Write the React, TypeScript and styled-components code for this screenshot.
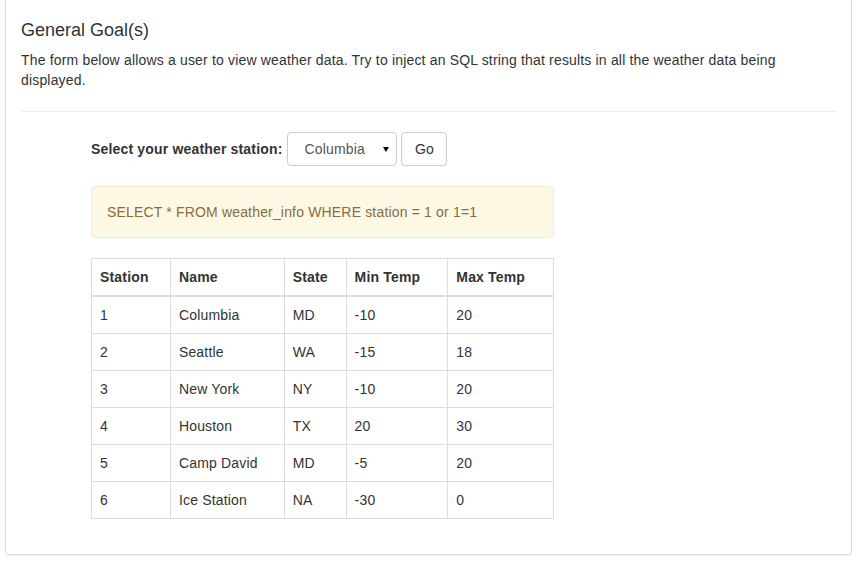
import React from "react";
import styled, { createGlobalStyle } from "styled-components";

const Global = createGlobalStyle`
  html, body { margin: 0; padding: 0; background: #fff; }
  body {
    font-family: "Liberation Sans", Arial, Helvetica, sans-serif;
    font-size: 14px;
    line-height: 20px;
    color: #333;
    letter-spacing: 0.17px;
  }
  * { box-sizing: border-box; }
`;

const Page = styled.div`
  padding: 0 5px 8px 5px;
`;

const Panel = styled.div`
  border: 1px solid #ddd;
  border-top: none;
  border-radius: 0 0 4px 4px;
  box-shadow: 0 1px 1px rgba(0, 0, 0, 0.05);
  padding: 20px 15px 35px 15px;
`;

const Title = styled.h4`
  margin: 0 0 10px 0;
  font-size: 18px;
  font-weight: 500;
  line-height: 20px;
  letter-spacing: 0;
  color: #333;
`;

const Para = styled.p`
  margin: 0 0 21px 0;
`;

const Rule = styled.hr`
  margin: 0 0 20px 0;
  border: 0;
  border-top: 1px solid #eee;
`;

const Content = styled.div`
  margin-left: 70px;
  width: 463px;
`;

const FormRow = styled.div`
  display: flex;
  align-items: center;
  gap: 4px;
  margin-bottom: 20px;
`;

const Label = styled.span`
  font-weight: bold;
  margin-right: 1px;
`;

const SelectBox = styled.div`
  width: 110px;
  height: 34px;
  border: 1px solid #ccc;
  border-radius: 4px;
  display: flex;
  align-items: center;
  justify-content: space-between;
  padding: 0 7px 0 16px;
  color: #555;
  background: #fff;
`;

const Button = styled.div`
  height: 34px;
  width: 46px;
  border: 1px solid #ccc;
  border-radius: 4px;
  display: flex;
  align-items: center;
  justify-content: center;
  background: #fff;
  color: #333;
`;

const Alert = styled.div`
  padding: 15px;
  background: #fcf8e3;
  border: 1px solid #faebcc;
  border-radius: 4px;
  color: #8a6d3b;
  margin-bottom: 20px;
`;

const Table = styled.table`
  width: 100%;
  border-collapse: collapse;
  border: 1px solid #ddd;
`;

const Th = styled.th<{ $w: number }>`
  width: ${(p) => p.$w}px;
  text-align: left;
  font-weight: bold;
  padding: 8px;
  line-height: 20px;
  border: 1px solid #ddd;
  border-bottom: 2px solid #ddd;
`;

const Td = styled.td`
  padding: 8px;
  line-height: 20px;
  border: 1px solid #ddd;
`;

const cols: [string, number][] = [
  ["Station", 79],
  ["Name", 114],
  ["State", 62],
  ["Min Temp", 102],
  ["Max Temp", 106],
];

const rows = [
  ["1", "Columbia", "MD", "-10", "20"],
  ["2", "Seattle", "WA", "-15", "18"],
  ["3", "New York", "NY", "-10", "20"],
  ["4", "Houston", "TX", "20", "30"],
  ["5", "Camp David", "MD", "-5", "20"],
  ["6", "Ice Station", "NA", "-30", "0"],
];

export default function App() {
  return (
    <Page>
      <Global />
      <Panel>
        <Title>General Goal(s)</Title>
        <Para>
          The form below allows a user to view weather data. Try to inject an SQL string that
          results in all the weather data being displayed.
        </Para>
        <Rule />
        <Content>
          <FormRow>
            <Label>Select your weather station:</Label>
            <SelectBox>
              <span>Columbia</span>
              <svg width="6" height="5" viewBox="0 0 6 5">
                <polygon points="0,0 6,0 3,5" fill="#000" />
              </svg>
            </SelectBox>
            <Button>Go</Button>
          </FormRow>
          <Alert>SELECT * FROM weather_info WHERE station = 1 or 1=1</Alert>
          <Table>
            <thead>
              <tr>
                {cols.map(([c, w]) => (
                  <Th key={c} $w={w}>
                    {c}
                  </Th>
                ))}
              </tr>
            </thead>
            <tbody>
              {rows.map((r) => (
                <tr key={r[0]}>
                  {r.map((v, i) => (
                    <Td key={i}>{v}</Td>
                  ))}
                </tr>
              ))}
            </tbody>
          </Table>
        </Content>
      </Panel>
    </Page>
  );
}
